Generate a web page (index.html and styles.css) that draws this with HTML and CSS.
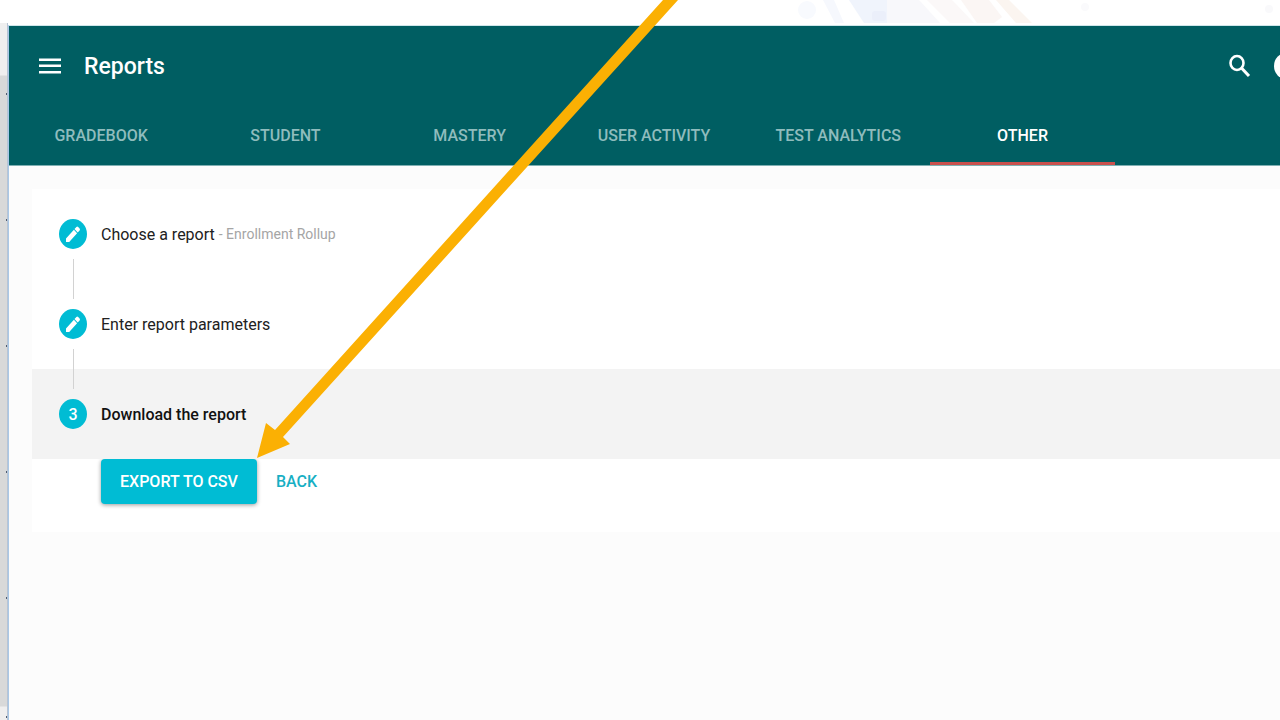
FILE: index.html
```html
<!DOCTYPE html>
<html lang="en">
<head>
  <meta charset="UTF-8">
  <meta name="viewport" content="width=device-width, initial-scale=1">
  <title>Reports</title>
  <link rel="stylesheet" href="styles.css">
</head>
<body>
  <div class="banner">
    <svg width="500" height="23" viewBox="0 0 500 23" aria-hidden="true">
      <circle cx="27" cy="10" r="9" fill="#f8fafe"/>
      <path d="M43 0h11l10 23h-9z" fill="#f6f8fd"/>
      <path d="M69 0h38v23H84z" fill="#f0f4fc"/>
      <path d="M107 0h32l21 23h-53z" fill="#f8f8fb"/>
      <rect x="92" y="11" width="14" height="10" rx="3" fill="#ebeffa"/>
      <path d="M147 0h25l22 23h-24z" fill="#fbf8f8"/>
      <path d="M181 0h28l13 17-8 6h-17z" fill="#fbf6f4"/>
      <path d="M216 0h13l23 23h-16z" fill="#fbf5f0"/>
      <circle cx="305" cy="7" r="4" fill="#fafafc"/>
      <circle cx="489" cy="9" r="4" fill="#f9f9fb"/>
    </svg>
  </div>

  <div class="shell">
    <div class="ruler"></div>

    <div class="app">
      <header class="header">
        <div class="toolbar">
          <button type="button" class="icon-btn" aria-label="Menu">
            <svg width="22" height="16" viewBox="0 0 22 16"><path d="M0 0.5h22v2.5H0zM0 6.5h22v2.5H0zM0 13h22v2.5H0z" fill="currentColor"/></svg>
          </button>
          <h1>Reports</h1>
          <div class="actions">
            <button type="button" class="icon-btn" aria-label="Search">
              <svg width="22" height="24" viewBox="0 0 22 24"><ellipse cx="8" cy="9" rx="6.5" ry="7" fill="none" stroke="currentColor" stroke-width="2.6"/><path d="M12.5 14l7.5 8" stroke="currentColor" stroke-width="3"/></svg>
            </button>
            <button type="button" class="icon-btn" aria-label="Help">
              <svg width="24" height="26" viewBox="0 0 24 26"><ellipse cx="12" cy="13" rx="12" ry="13" fill="currentColor"/></svg>
            </button>
          </div>
        </div>
        <nav class="tabs">
          <a href="#gradebook">GRADEBOOK</a>
          <a href="#student">STUDENT</a>
          <a href="#mastery">MASTERY</a>
          <a href="#activity">USER ACTIVITY</a>
          <a href="#analytics">TEST ANALYTICS</a>
          <a href="#other" class="active" aria-current="page">OTHER</a>
        </nav>
      </header>

      <main class="card">
        <ol class="steps">
          <li class="step">
            <span class="badge">
              <svg width="16" height="18" viewBox="0 0 16 18"><path d="M1 13.5V17h3.2l7.9-8.8-3.2-3.5zM9.5 4l3.2 3.5 1.9-2.1q.8-1 0-1.9l-1.5-1.6q-.9-.8-1.7 0z" fill="currentColor"/></svg>
            </span>
            <span>Choose a report</span>
            <small>- Enrollment Rollup</small>
          </li>
          <li class="step">
            <span class="badge">
              <svg width="16" height="18" viewBox="0 0 16 18"><path d="M1 13.5V17h3.2l7.9-8.8-3.2-3.5zM9.5 4l3.2 3.5 1.9-2.1q.8-1 0-1.9l-1.5-1.6q-.9-.8-1.7 0z" fill="currentColor"/></svg>
            </span>
            <span>Enter report parameters</span>
          </li>
          <li class="step current" aria-current="step">
            <span class="badge">3</span>
            <span>Download the report</span>
          </li>
        </ol>
        <div class="step-actions">
          <button type="button" class="btn btn-primary">EXPORT TO CSV</button>
          <button type="button" class="btn btn-flat">BACK</button>
        </div>
      </main>
    </div>
  </div>

  <!-- callout arrow pointing at the export button -->
  <svg class="arrow" width="700" height="460" viewBox="0 0 700 460" aria-hidden="true">
    <path d="M663 0L275 430l-9-7-9 35 33-14-7-7L678 0z" fill="#fbb003"/>
  </svg>
</body>
</html>
```

FILE: styles.css
```css
* {
  box-sizing: border-box;
}
body {
  margin: 0;
  font-family: Roboto, "Liberation Sans", sans-serif;
  font-size: 16px;
  color: #212121;
  background: #fff;
  position: relative;
  overflow-x: hidden;
}
button {
  font: inherit;
  border: none;
  background: none;
  cursor: pointer;
}
svg {
  display: block;
}

.banner {
  display: flex;
  justify-content: flex-end;
  height: 23px;
}
.shell {
  display: flex;
  min-height: calc(100vh - 23px);
}
.ruler {
  width: 8px;
  border-right: 1px solid #b8c4d4;
  background:
    linear-gradient(#4c5b70, #4c5b70) 6px 70px / 2px 2px no-repeat,
    linear-gradient(#4c5b70, #4c5b70) 6px 196px / 2px 2px no-repeat,
    linear-gradient(#4c5b70, #4c5b70) 6px 322px / 2px 2px no-repeat,
    linear-gradient(#4c5b70, #4c5b70) 6px 448px / 2px 2px no-repeat,
    linear-gradient(#4c5b70, #4c5b70) 6px 574px / 2px 2px no-repeat,
    linear-gradient(#4c5b70, #4c5b70) 6px 693px / 2px 2px no-repeat,
    linear-gradient(#efefef 52px, #d8d9d9 53px, #d8d9d9 683px, #efefef 684px);
}
.app {
  flex: 1;
  min-width: 0;
  margin-top: 2px;
  border-top: 1px solid #cfe6ea;
  border-left: 1px solid #a9c8e6;
  background: #fcfcfc;
  overflow: hidden;
}

.header {
  background: #005e62;
  color: #fff;
  border-bottom: 1px solid #7fb0b3;
}
.toolbar {
  display: flex;
  align-items: center;
  height: 80px;
  padding-left: 30px;
}
.icon-btn {
  padding: 0;
  color: #fff;
}
h1 {
  margin: 0 0 0 23px;
  font-size: 23px;
  font-weight: 500;
}
.actions {
  display: flex;
  align-items: center;
  gap: 23px;
  margin-left: auto;
  margin-right: -18px;
}
.tabs {
  display: flex;
  height: 59px;
}
.tabs a {
  flex: 0 0 14.5%;
  display: flex;
  align-items: center;
  justify-content: center;
  padding-top: 3px;
  border-bottom: 3px solid transparent;
  color: #8fbcbd;
  font-weight: 500;
  text-decoration: none;
}
.tabs a.active {
  color: #fff;
  border-bottom-color: #c9504d;
}

.card {
  margin: 23px 0 0 23px;
  padding-bottom: 28px;
  background: #fff;
}
.steps {
  margin: 0;
  padding: 0;
  list-style: none;
}
.step {
  display: flex;
  align-items: center;
  height: 90px;
  padding-left: 27px;
  position: relative;
}
.step + .step::before {
  content: "";
  position: absolute;
  left: 41px;
  top: -20px;
  width: 1px;
  height: 40px;
  background: #d2d2d2;
}
.step small {
  margin-left: 4px;
  font-size: 14px;
  color: #a5a5a5;
}
.current {
  background: #f3f3f3;
  color: #111;
  font-weight: 500;
}
.badge {
  display: flex;
  align-items: center;
  justify-content: center;
  width: 28px;
  height: 30px;
  margin-right: 14px;
  border-radius: 50%;
  background: #00bcd4;
  color: #fff;
}
.step-actions {
  display: flex;
  padding-left: 69px;
}
.btn {
  height: 45px;
  padding: 0 19px;
  border-radius: 4px;
  font-weight: 500;
}
.btn-primary {
  background: #00bcd4;
  color: #fff;
  box-shadow: 0 1px 4px rgba(0, 0, 0, 0.4);
}
.btn-flat {
  color: #17afc4;
}

.arrow {
  position: absolute;
  left: 0;
  top: 0;
  pointer-events: none;
}
```
